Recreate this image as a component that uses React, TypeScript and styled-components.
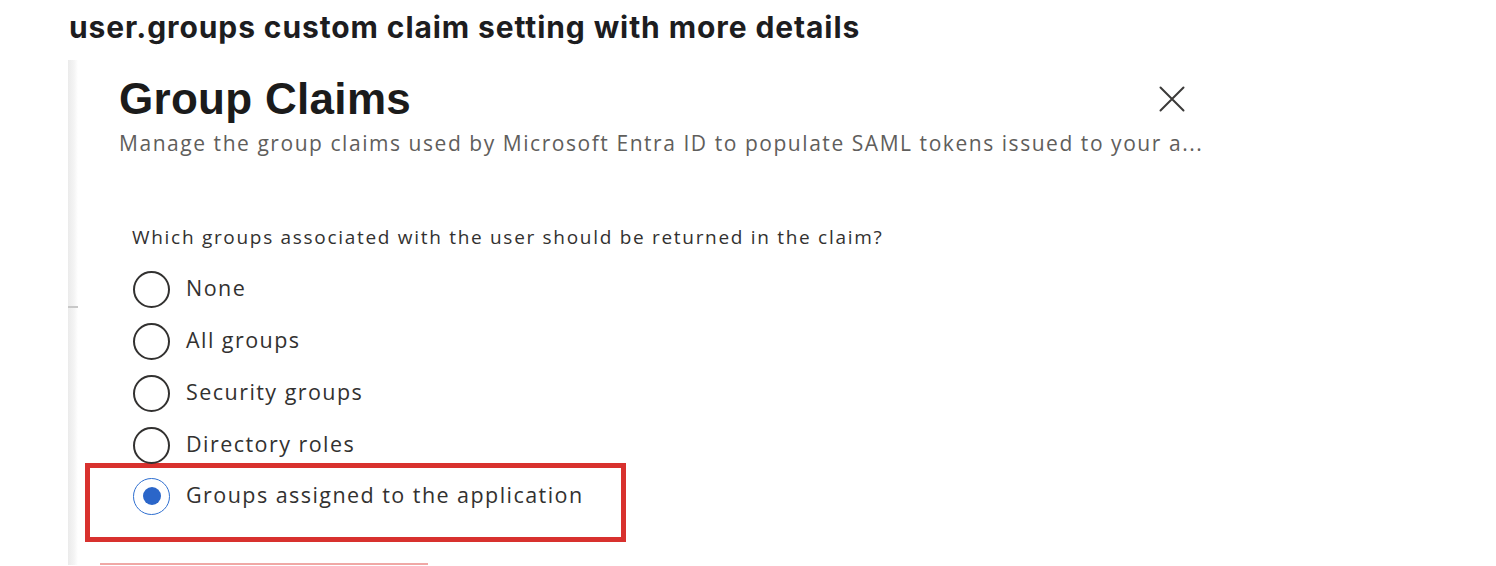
import styled, { createGlobalStyle } from 'styled-components';

const GlobalStyle = createGlobalStyle`
  html, body {
    margin: 0;
    padding: 0;
    background: #ffffff;
  }
  body {
    font-family: 'Open Sans', 'Noto Sans', sans-serif;
    overflow: hidden;
  }
`;

const Page = styled.div`
  width: 1496px;
  height: 566px;
  overflow: hidden;
  padding-top: 10px;
  box-sizing: border-box;
`;

const Heading = styled.h2`
  margin: 0 0 11px 69px;
  font-family: Inter, 'Liberation Sans', sans-serif;
  font-weight: 700;
  font-size: 30px;
  line-height: 34px;
  letter-spacing: 0.9px;
  color: #1d1d1f;
`;

const Figure = styled.div`
  display: flex;
  margin-left: 68px;
`;

const Strip = styled.div`
  width: 10px;
  flex-shrink: 0;
  display: flex;
  flex-direction: column;
  background: linear-gradient(to right, #ebebeb, #f4f4f4 60%, #ffffff);
  margin-top: 5px;
`;

const StripTick = styled.div`
  margin-top: 246px;
  height: 2px;
  background: #c8c8c8;
`;

const Panel = styled.div`
  padding: 18px 0 0 41px;
  width: 1066px;
`;

const TitleRow = styled.div`
  display: flex;
  align-items: center;
  justify-content: space-between;
  height: 52px;
`;

const Title = styled.h1`
  margin: 0;
  font-family: 'Liberation Sans', Arial, sans-serif;
  font-weight: 700;
  font-size: 44px;
  line-height: 52px;
  letter-spacing: 0.3px;
  color: #1b1b1b;
`;

const CloseButton = styled.button`
  border: none;
  background: transparent;
  padding: 0;
  width: 26px;
  height: 26px;
  display: flex;
  align-items: center;
  justify-content: center;
  color: #3b3a39;
  cursor: pointer;
`;

const Subtitle = styled.div`
  margin-top: 4px;
  font-size: 21px;
  line-height: 28px;
  letter-spacing: 1.55px;
  color: #5f5e5c;
  white-space: nowrap;
`;

const Form = styled.div`
  padding-left: 13px;
`;

const Question = styled.div`
  margin-top: 66px;
  margin-bottom: 12px;
  font-size: 19px;
  line-height: 28px;
  letter-spacing: 1.7px;
  color: #323130;
  white-space: nowrap;
`;

const RadioRow = styled.label`
  display: flex;
  align-items: center;
  gap: 16px;
  height: 52px;
  padding-left: 1px;
  cursor: pointer;
`;

const RadioCircle = styled.span<{ checked?: boolean }>`
  width: 37px;
  height: 37px;
  box-sizing: border-box;
  border-radius: 50%;
  border: ${p => (p.checked ? '1.5px solid #2f6fd0' : '2px solid #323130')};
  display: flex;
  align-items: center;
  justify-content: center;
  flex-shrink: 0;

  &::after {
    content: '';
    display: ${p => (p.checked ? 'block' : 'none')};
    width: 18px;
    height: 18px;
    border-radius: 50%;
    background: #2b66c9;
  }
`;

const RadioLabel = styled.span`
  font-size: 21.5px;
  line-height: 28px;
  letter-spacing: 1.45px;
  color: #323130;
  padding-bottom: 2px;
`;

const Highlight = styled.div`
  margin: -8px 0 0 -47px;
  width: 541px;
  height: 79px;
  box-sizing: border-box;
  border: 5px solid #d8312e;
  padding: 2px 0 0 42px;
`;

const NextHighlight = styled.div`
  margin: 21px 0 0 -32px;
  width: 328px;
  height: 2px;
  background: #f0a8a6;
`;

const options = ['None', 'All groups', 'Security groups', 'Directory roles'];

export default function App() {
  return (
    <Page>
      <GlobalStyle />
      <Heading>user.groups custom claim setting with more details</Heading>
      <Figure>
        <Strip>
          <StripTick />
        </Strip>
        <Panel>
          <TitleRow>
            <Title>Group Claims</Title>
            <CloseButton type="button" aria-label="Close">
              <svg width="26" height="26" viewBox="0 0 26 26" fill="none">
                <path d="M1.5 1.5 L24.5 24.5 M24.5 1.5 L1.5 24.5" stroke="currentColor" strokeWidth="2" strokeLinecap="round" />
              </svg>
            </CloseButton>
          </TitleRow>
          <Subtitle>
            Manage the group claims used by Microsoft Entra ID to populate SAML tokens issued to your a...
          </Subtitle>
          <Form>
            <Question>Which groups associated with the user should be returned in the claim?</Question>
            {options.map(o => (
              <RadioRow key={o}>
                <RadioCircle />
                <RadioLabel>{o}</RadioLabel>
              </RadioRow>
            ))}
            <Highlight>
              <RadioRow>
                <RadioCircle checked />
                <RadioLabel>Groups assigned to the application</RadioLabel>
              </RadioRow>
            </Highlight>
            <NextHighlight />
          </Form>
        </Panel>
      </Figure>
    </Page>
  );
}
